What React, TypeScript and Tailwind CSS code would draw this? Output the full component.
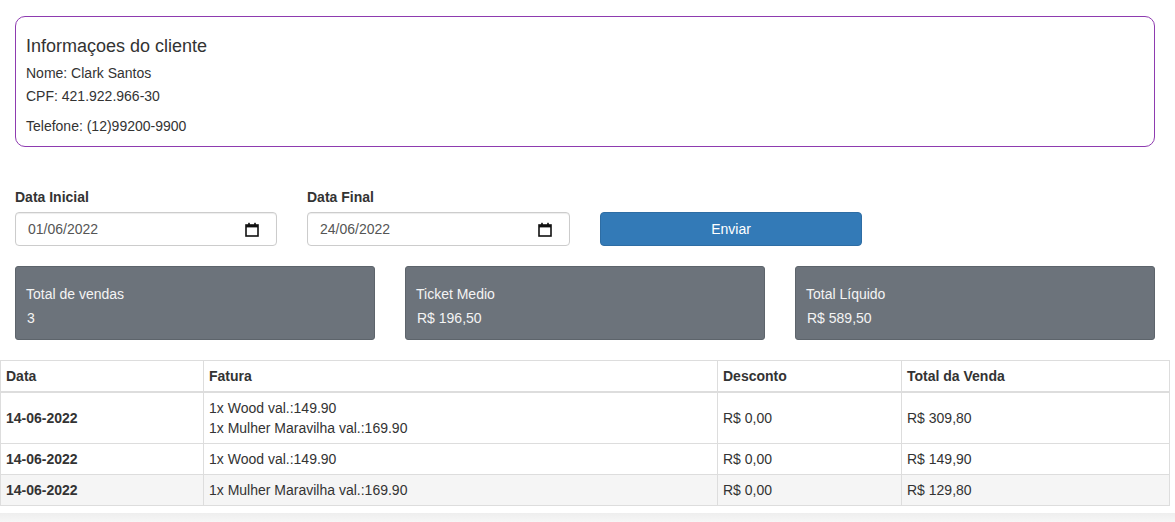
import React from 'react';

const vendas = [
  { data: '14-06-2022', itens: ['1x Wood val.:149.90', '1x Mulher Maravilha val.:169.90'], desconto: 'R$ 0,00', total: 'R$ 309,80' },
  { data: '14-06-2022', itens: ['1x Wood val.:149.90'], desconto: 'R$ 0,00', total: 'R$ 149,90' },
  { data: '14-06-2022', itens: ['1x Mulher Maravilha val.:169.90'], desconto: 'R$ 0,00', total: 'R$ 129,80' },
];

function CalendarIcon() {
  return (
    <svg width="14" height="15" viewBox="0 0 14 15" className="shrink-0">
      <rect x="1" y="3" width="12" height="11" fill="none" stroke="#111" strokeWidth="1.6" />
      <rect x="1" y="3" width="12" height="2.4" fill="#111" />
      <rect x="3.2" y="0.8" width="1.6" height="3" fill="#111" />
      <rect x="9.2" y="0.8" width="1.6" height="3" fill="#111" />
    </svg>
  );
}

function DateField({ label, value, wide }: { label: string; value: string; wide?: boolean }) {
  return (
    <div className={wide ? 'w-[263px]' : 'w-[262px]'}>
      <div className="font-bold leading-5 mb-[5px]">{label}</div>
      <div className="h-[34px] border border-[#ccc] rounded-[4px] pl-3 pr-[17px] flex items-center justify-between text-[#555] shadow-[inset_0_1px_1px_rgba(0,0,0,0.075)]">
        <span>{value}</span>
        <CalendarIcon />
      </div>
    </div>
  );
}

function StatCard({ title, value }: { title: string; value: string }) {
  return (
    <div className="w-[360px] h-[74px] bg-[#6c737b] border border-[#5d646b] rounded-[3px] pt-[17px] px-[10px] text-[#f4f4f4]">
      <div className="leading-5">{title}</div>
      <div className="leading-5 mt-1 pl-[1px]">{value}</div>
    </div>
  );
}

export default function App() {
  return (
    <div className="w-[1175px] min-h-[522px] bg-white text-[14px] text-[#333] leading-5 font-['Liberation_Sans',Arial,sans-serif]">
      <div className="w-[1170px]">
        <div className="mx-[15px] mt-[16px] h-[131px] border border-[#8e3bb0] rounded-[10px] px-[10px] pt-[19px]">
          <h4 className="text-[18px] leading-5 mb-[7px]">Informaçoes do cliente</h4>
          <p className="mb-[3px]">Nome: Clark Santos</p>
          <p className="mb-[10px]">CPF: 421.922.966-30</p>
          <p>Telefone: (12)99200-9900</p>
        </div>

        <div className="flex items-end gap-[30px] px-[15px] mt-[40px]">
          <DateField label="Data Inicial" value="01/06/2022" />
          <DateField label="Data Final" value="24/06/2022" wide />
          <button className="w-[262px] h-[34px] bg-[#337ab7] border border-[#2e6da4] rounded-[4px] text-white">Enviar</button>
        </div>

        <div className="flex gap-[30px] px-[15px] mt-[20px]">
          <StatCard title="Total de vendas" value="3" />
          <StatCard title="Ticket Medio" value="R$ 196,50" />
          <StatCard title="Total Líquido" value="R$ 589,50" />
        </div>

        <table className="w-[1170px] mt-[20px] border-collapse border border-[#ddd]">
          <thead>
            <tr className="text-left">
              <th className="w-[203px] px-[5px] py-[5px] border border-[#ddd] border-b-2 font-bold">Data</th>
              <th className="w-[514px] px-[5px] py-[5px] border border-[#ddd] border-b-2 font-bold">Fatura</th>
              <th className="w-[184px] px-[5px] py-[5px] border border-[#ddd] border-b-2 font-bold">Desconto</th>
              <th className="px-[5px] py-[5px] border border-[#ddd] border-b-2 font-bold">Total da Venda</th>
            </tr>
          </thead>
          <tbody>
            {vendas.map((v, i) => (
              <tr key={i} className={i === 2 ? 'bg-[#f5f5f5]' : ''}>
                <td className="px-[5px] py-[5px] border border-[#ddd] font-bold align-middle">{v.data}</td>
                <td className="px-[5px] py-[5px] border border-[#ddd] align-middle">
                  {v.itens.map((it) => (
                    <div key={it}>{it}</div>
                  ))}
                </td>
                <td className="px-[5px] py-[5px] border border-[#ddd] align-middle">{v.desconto}</td>
                <td className="px-[5px] py-[5px] border border-[#ddd] align-middle">{v.total}</td>
              </tr>
            ))}
          </tbody>
        </table>
      </div>
      <div className="mt-[7px] h-[10px] bg-gradient-to-b from-[#eeeeee] to-[#f7f7f7]" />
    </div>
  );
}
